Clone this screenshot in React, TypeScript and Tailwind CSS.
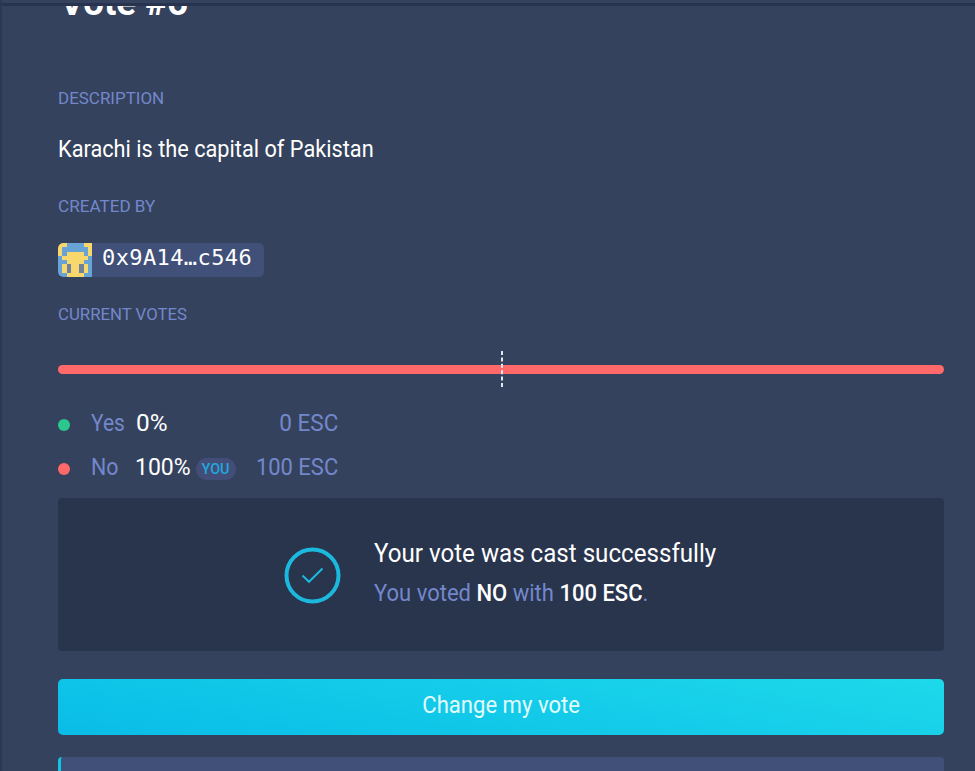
import type { ReactNode } from 'react';

const identicon = [
  'YYBBBBYY',
  'YBBBBBBY',
  'YBYYYYBY',
  'BYYYYYYB',
  'BBYYYYBB',
  'BYDYYDYB',
  'BYDYYDYB',
  'BBYYYYBB',
];
const fills: Record<string, string> = { Y: '#f8d86d', B: '#68a3d5', D: '#71819c' };

function Identicon() {
  return (
    <svg viewBox="0 0 8 8" className="h-[34px] w-[34px] rounded-l-[5px]" shapeRendering="crispEdges">
      {identicon.flatMap((row, y) =>
        [...row].map((c, x) => <rect key={`${x}-${y}`} x={x} y={y} width="1" height="1" fill={fills[c]} />),
      )}
    </svg>
  );
}

function Label({ children, className }: { children: ReactNode; className: string }) {
  return (
    <h2 className={`w-max origin-left whitespace-nowrap text-[17px] leading-[18px] pb-[2px] text-[#7388cc] ${className}`}>
      {children}
    </h2>
  );
}

export default function App() {
  return (
    <div className="h-[771px] w-[975px] overflow-hidden border-l-2 border-[#2b3853] bg-[#35425d] font-[Roboto,sans-serif] text-white">
      <div className="h-[6px] border-b-[3px] border-[#28344f]" />
      <main className="ml-[56px] flex h-[765px] w-[886px] flex-col overflow-hidden">
        <div className="h-[83px] shrink-0 overflow-hidden">
          <h1 className="-mt-[21px] ml-[2px] w-max origin-left text-[36px] leading-[36px] font-bold scale-x-[1.02]">
            Vote #6
          </h1>
        </div>
        <Label className="scale-x-[0.998]">DESCRIPTION</Label>
        <p className="mt-[26px] w-max origin-left text-[23px] leading-[30px] scale-x-[0.945]">
          Karachi is the capital of Pakistan
        </p>
        <Label className="mt-[32px] scale-x-[1.006]">CREATED BY</Label>
        <div className="mt-[26px] flex h-[34px] w-[206px] shrink-0 items-center overflow-hidden rounded-[5px] bg-[#405078]">
          <Identicon />
          <span className="-mt-[5px] ml-[10px] font-['DejaVu_Sans_Mono',monospace] text-[22px] leading-[30px] tracking-[0.4px]">
            0x9A14…c546
          </span>
        </div>
        <Label className="mt-[28px] scale-x-[0.987]">CURRENT VOTES</Label>

        <div className="mt-[26px] grid h-[36px] shrink-0 items-center">
          <div className="col-start-1 row-start-1 h-[9px] rounded-full bg-[#ff6969]" />
          <svg className="col-start-1 row-start-1 ml-[443px] h-[36px] w-[2px]" viewBox="0 0 2 36">
            <path d="M1 0v36" stroke="#e3e8f2" strokeWidth="2" strokeDasharray="4 2.4" />
          </svg>
        </div>

        <div className="mt-[15px] w-[280px] text-[23px] leading-[44px]">
          <div className="flex h-[44px] items-center">
            <i className="mt-px h-[12px] w-[12px] rounded-full bg-[#2cc68f]" />
            <span className="ml-[21px] w-[45px] origin-left text-[#7388cc] scale-x-[0.91]">Yes</span>
            <span className="origin-left scale-x-[1.06]">0%</span>
            <span className="ml-auto origin-right scale-x-[0.98] text-[#7388cc]">0 ESC</span>
          </div>
          <div className="flex h-[44px] items-center">
            <i className="mt-px h-[12px] w-[12px] rounded-full bg-[#ff6969]" />
            <span className="ml-[21px] w-[44px] origin-left text-[#7388cc] scale-x-[0.93]">No</span>
            <span className="w-[61px] origin-left">100%</span>
            <span className="mt-px flex h-[22px] w-[40px] items-center justify-center rounded-full bg-[#434e78] text-[15px] font-medium text-[#21a8dc]">
              <span className="scale-x-[0.96]">YOU</span>
            </span>
            <span className="ml-auto origin-right scale-x-[0.955] text-[#7388cc]">100&nbsp;ESC</span>
          </div>
        </div>

        <section className="mt-[8px] flex h-[153px] shrink-0 items-center rounded-[4px] bg-[#29344d]">
          <svg className="mt-px ml-[226px] h-[57px] w-[57px] shrink-0" viewBox="0 0 57 57" fill="none" stroke="#1cb9df">
            <circle cx="28.5" cy="28.5" r="26" strokeWidth="4" />
            <path d="M18.5 28.5l6.5 6.3 13.5-13.3" strokeWidth="2" />
          </svg>
          <div className="ml-[33px] flex flex-col">
            <p className="-mt-[2px] w-max origin-left text-[26px] leading-[40px] scale-x-[0.928]">
              Your vote was cast successfully
            </p>
            <p className="mt-[1px] w-max origin-left text-[23px] leading-[40px] text-[#7388cc] scale-x-[0.957]">
              You voted <b className="font-medium text-white">NO</b> with{' '}
              <b className="font-medium text-white">100 ESC</b>.
            </p>
          </div>
        </section>

        <button className="mt-[28px] flex h-[56px] shrink-0 items-center justify-center rounded-[5px] bg-linear-[190deg,#1dd9ea,#09bce7] text-[23px] text-[#e2fbfd]">
          <span className="-mt-[2px] scale-x-[0.96]">Change my vote</span>
        </button>
        <div className="mt-[22px] h-[40px] shrink-0 rounded-[4px] border-l-[3px] border-[#12c5e2] bg-[#405078]" />
      </main>
    </div>
  );
}
